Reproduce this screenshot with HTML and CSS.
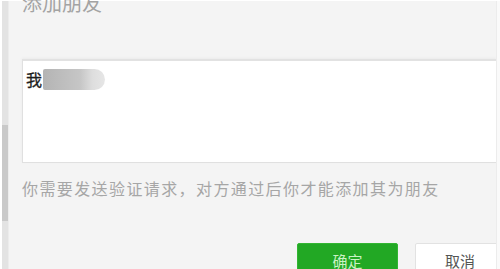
FILE: index.html
```html
<!DOCTYPE html>
<html lang="zh-CN">
<head>
    <meta charset="UTF-8">
    <meta name="viewport" content="width=device-width, initial-scale=1.0">
    <title>添加朋友</title>
    <link rel="stylesheet" href="styles.css">
</head>
<body>
    <div class="page">
        <div class="scrollbar">
            <div class="thumb"></div>
        </div>

        <div class="dialog">
            <h1 class="title">添加朋友</h1>

            <div class="message-box">
                <span class="greeting">我</span><span class="mask"></span>
            </div>

            <p class="hint">你需要发送验证请求，对方通过后你才能添加其为朋友</p>

            <div class="actions">
                <button class="btn btn-ok">确定</button>
                <button class="btn btn-cancel">取消</button>
            </div>
        </div>

        <div class="edge"></div>
    </div>
</body>
</html>
```

FILE: styles.css
```css
/* WeChat add-friend dialog */
html, body {
    margin: 0;
    height: 100%;
    overflow: hidden;
    background: #ffffff;
}

body {
    font-family: 'Noto Sans CJK SC', 'Noto Sans', sans-serif;
}

.page {
    display: flex;
    height: 100%;
    border-top: 1px solid #ffffff;
    box-sizing: border-box;
}

.scrollbar {
    width: 7px;
    margin-left: 2px;
    padding-top: 124px;
    background: #e3e3e3;
    border-right: 1px solid #ececec;
    box-sizing: border-box;
}

.thumb {
    height: 96px;
    background: #c9c9c9;
}

.dialog {
    flex: 1;
    background: #f4f4f4;
    padding-left: 13px;
    min-width: 0;
}

.title {
    margin: -10px 0 0;
    font-size: 20px;
    font-weight: normal;
    line-height: 24px;
    color: #a3a3a3;
}

.message-box {
    margin-top: 44px;
    height: 104px;
    background: #ffffff;
    border: 1px solid #e0e0e0;
    border-top: 2px solid #e2e2e2;
    border-right: none;
    box-shadow: 0 -1px 2px #ebebeb;
    box-sizing: border-box;
    padding: 8px 0 0 3px;
    display: flex;
    align-items: flex-start;
}

.greeting {
    font-size: 16px;
    line-height: 20px;
    color: #1e1e1e;
    font-weight: normal;
    -webkit-text-stroke: 0.3px #1e1e1e;
}

.mask {
    width: 62px;
    height: 21px;
    margin-left: 1px;
    border-radius: 2px 11px 11px 2px;
    background: linear-gradient(90deg, #b4b4b4 0%, #bdbdbd 30%, #c6c6c6 60%, #dedede 80%, #e6e6e6 100%);
}

.hint {
    margin: 15px 0 0;
    font-size: 16px;
    letter-spacing: 1.4px;
    line-height: 20px;
    color: #a6a6a6;
}

.actions {
    display: flex;
    gap: 17px;
    margin-top: 45px;
    padding-left: 275px;
}

.btn {
    height: 34px;
    font-family: inherit;
    font-size: 15px;
    border-radius: 2px;
    padding: 0;
    flex-shrink: 0;
}

.btn-ok {
    width: 101px;
    background: #22a824;
    border: 1px solid #32b532;
    color: #c9f2c4;
}

.btn-cancel {
    width: 90px;
    background: #ffffff;
    border: 1px solid #e2e2e2;
    color: #555555;
}

.edge {
    width: 3px;
    background: #fafafa;
    border-left: 1px solid #ececec;
}
```
